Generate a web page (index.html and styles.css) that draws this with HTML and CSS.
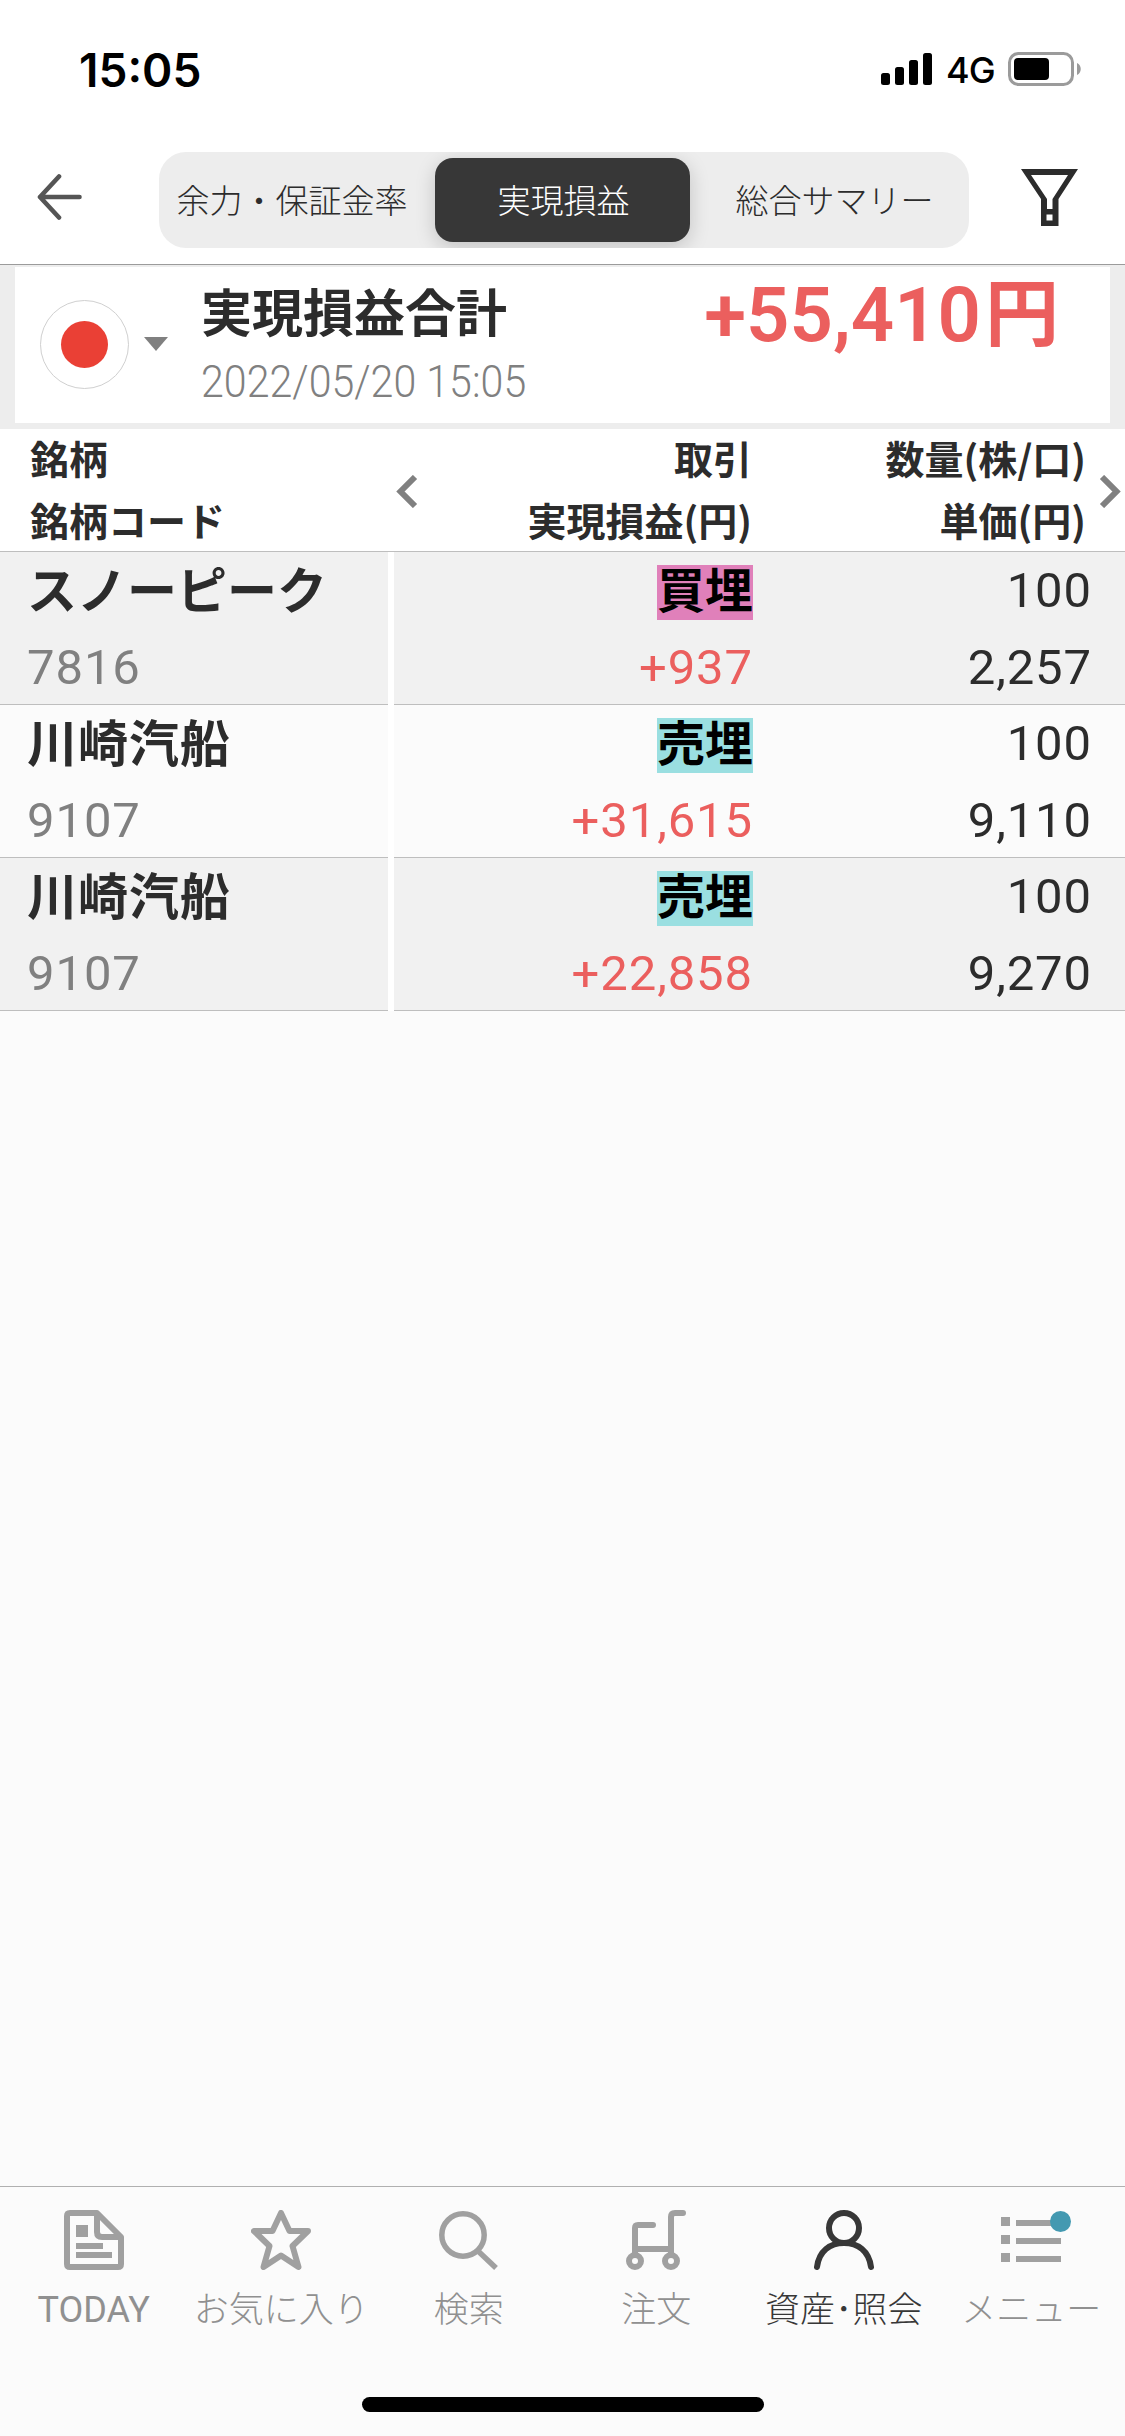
FILE: index.html
```html
<!DOCTYPE html>
<html lang="ja">
<head>
    <meta charset="UTF-8">
    <meta name="viewport" content="width=device-width, initial-scale=1.0">
    <title>実現損益</title>
    <link rel="stylesheet" href="styles.css">
</head>
<body>
    <div class="app">
        <div class="status">
            <div class="time">15:05</div>
            <div class="status-right">
                <svg class="signal" width="51" height="32" viewBox="0 0 51 32">
                    <rect x="0" y="20" width="9" height="12" rx="2.5"/>
                    <rect x="14" y="14" width="9" height="18" rx="2.5"/>
                    <rect x="28" y="7" width="9" height="25" rx="2.5"/>
                    <rect x="42" y="0" width="9" height="32" rx="2.5"/>
                </svg>
                <span class="network">4G</span>
                <svg class="battery" width="74" height="34" viewBox="0 0 74 34">
                    <rect x="1.5" y="1.5" width="63" height="31" rx="9" fill="none" stroke="#9b9b9b" stroke-width="3"/>
                    <rect x="6" y="6" width="35" height="22" rx="4"/>
                    <path d="M69 11c5 2 5 10 0 12z" fill="#9b9b9b"/>
                </svg>
            </div>
        </div>

        <header class="nav">
            <svg class="back" width="45" height="46" viewBox="0 0 45 46" fill="none" stroke="#555" stroke-width="4.6" stroke-linecap="round" stroke-linejoin="round">
                <path d="M42.5 23H3M22 2.5L3 23l19 20.5"/>
            </svg>
            <div class="segments">
                <div class="segment">余力・保証金率</div>
                <div class="segment active">実現損益</div>
                <div class="segment">総合サマリー</div>
            </div>
            <svg class="filter" width="57" height="57" viewBox="0 0 57 57">
                <path fill="#2c2c2c" fill-rule="evenodd" d="M0 0h57L37.500 30v27H20V30zM10 6l16 24v10h5.500V30L47 6zM25.500 45.500h6v6h-6z"/>
            </svg>
        </header>

        <section class="summary">
            <div class="card">
                <div class="flag"><div class="sun"></div></div>
                <div class="caret"></div>
                <div class="summary-text">
                    <div class="summary-title">実現損益合計</div>
                    <div class="summary-date">2022/05/20 15:05</div>
                </div>
                <div class="total"><span class="total-number">+55,410</span><span class="yen">円</span></div>
            </div>
        </section>

        <div class="table-head">
            <div class="head-name">
                <div>銘柄</div>
                <div>銘柄コード</div>
            </div>
            <svg class="chevron" width="22" height="33" viewBox="0 0 22 33" fill="none" stroke="#808080" stroke-width="6">
                <path d="M19 2L4.500 16.500 19 31"/>
            </svg>
            <div class="head-trade">
                <div>取引</div>
                <div>実現損益(円)</div>
            </div>
            <div class="head-qty">
                <div>数量(株/口)</div>
                <div>単価(円)</div>
            </div>
            <svg class="chevron" width="22" height="33" viewBox="0 0 22 33" fill="none" stroke="#808080" stroke-width="6">
                <path d="M3 2l14.500 14.500L3 31"/>
            </svg>
        </div>

        <div class="rows">
            <div class="row">
                <div class="cell-name">
                    <div class="name">スノーピーク</div>
                    <div class="code">7816</div>
                </div>
                <div class="cell-values">
                    <div class="trade">
                        <div class="tag buy">買埋</div>
                        <div class="profit">+937</div>
                    </div>
                    <div class="qty">
                        <div class="count">100</div>
                        <div class="price">2,257</div>
                    </div>
                </div>
            </div>
            <div class="row">
                <div class="cell-name">
                    <div class="name kanji">川崎汽船</div>
                    <div class="code">9107</div>
                </div>
                <div class="cell-values">
                    <div class="trade">
                        <div class="tag sell">売埋</div>
                        <div class="profit">+31,615</div>
                    </div>
                    <div class="qty">
                        <div class="count">100</div>
                        <div class="price">9,110</div>
                    </div>
                </div>
            </div>
            <div class="row">
                <div class="cell-name">
                    <div class="name kanji">川崎汽船</div>
                    <div class="code">9107</div>
                </div>
                <div class="cell-values">
                    <div class="trade">
                        <div class="tag sell">売埋</div>
                        <div class="profit">+22,858</div>
                    </div>
                    <div class="qty">
                        <div class="count">100</div>
                        <div class="price">9,270</div>
                    </div>
                </div>
            </div>
        </div>

        <nav class="tabs">
            <div class="tab">
                <svg width="60" height="60" viewBox="0 0 60 60" fill="none" stroke="currentColor" stroke-width="6" stroke-linejoin="round">
                    <path d="M6 3h27L57 27v27q0 3-3 3H6q-3 0-3-3V6q0-3 3-3zM33 3v19q0 5 5 5h19"/>
                    <path fill="currentColor" stroke="none" d="M12 15h12v12H12zM12 33h27v6H12zM12 42h36v6H12z"/>
                </svg>
                <div class="label latin">TODAY</div>
            </div>
            <div class="tab">
                <svg width="60" height="60" viewBox="0 0 60 60" fill="none" stroke="currentColor" stroke-width="6" stroke-linejoin="round">
                    <path d="M30 3l8.500 18H57L41.500 36l6 21L30 45.500 12.500 57l6-21L3 21h18.500z"/>
                </svg>
                <div class="label">お気に入り</div>
            </div>
            <div class="tab">
                <svg width="60" height="60" viewBox="0 0 60 60" fill="none" stroke="currentColor" stroke-width="5.500">
                    <circle cx="24" cy="25" r="21.200"/>
                    <path d="M38.500 40.500L57 58"/>
                </svg>
                <div class="label">検索</div>
            </div>
            <div class="tab">
                <svg width="60" height="60" viewBox="0 0 60 60" fill="none" stroke="currentColor" stroke-width="6" stroke-linecap="round">
                    <circle cx="9" cy="51" r="6"/>
                    <circle cx="45" cy="51" r="6"/>
                    <path d="M9 45V18q0-3 3-3h15M45 45V7q0-4 4-4h8M9 39h36"/>
                </svg>
                <div class="label">注文</div>
            </div>
            <div class="tab current">
                <svg width="60" height="60" viewBox="0 0 60 60" fill="none" stroke="currentColor" stroke-width="6" stroke-linecap="round">
                    <circle cx="30" cy="18" r="15"/>
                    <path d="M3 57C5 41 16 33 30 33s25 8 27 24"/>
                </svg>
                <div class="label">資産･照会</div>
            </div>
            <div class="tab">
                <div class="menu-icon">
                    <svg width="60" height="60" viewBox="0 0 60 60" fill="currentColor">
                        <path d="M0 7h9v9H0zM0 25h9v9H0zM0 43h9v9H0zM15 10h45v6H15zM15 28h45v6H15zM15 46h45v6H15z"/>
                    </svg>
                    <span class="badge"></span>
                </div>
                <div class="label">メニュー</div>
            </div>
        </nav>
        <div class="home-bar"></div>
    </div>
</body>
</html>
```

FILE: styles.css
```css
* {
    box-sizing: border-box;
}

body {
    margin: 0;
    background: #fbfbfb;
    color: #2c2c2c;
    font-family: "Noto Sans CJK JP", sans-serif;
}

svg {
    display: block;
    flex: none;
}

.app {
    width: 1125px;
    height: 2436px;
    display: flex;
    flex-direction: column;
    overflow: hidden;
}

.status {
    height: 138px;
    padding: 0 43px 0 79px;
    background: #fff;
    color: #000;
    font-family: Inter, sans-serif;
    display: flex;
    align-items: center;
    justify-content: space-between;
}

.time {
    padding-top: 1px;
    font-size: 46px;
    font-weight: 600;
    line-height: 54px;
}

.status-right {
    display: flex;
    align-items: center;
}

.network {
    width: 76px;
    padding-left: 14px;
    padding-top: 2px;
    font-size: 36px;
    line-height: 40px;
    font-weight: 500;
    letter-spacing: -1px;
}

.nav {
    height: 127px;
    padding: 14px 47px 0 37px;
    background: #fff;
    border-bottom: 1px solid #9b9b9b;
    display: flex;
    align-items: flex-start;
}

.back {
    margin-top: 22px;
}

.segments {
    width: 810px;
    height: 96px;
    margin: 0 52px 0 77px;
    padding: 6px 0;
    background: #ededed;
    border-radius: 27px;
    display: flex;
    overflow: hidden;
}

.segment {
    width: 276px;
    padding-right: 10px;
    font-size: 33px;
    font-weight: 300;
    line-height: 82px;
    text-align: center;
    white-space: nowrap;
}

.segment.active {
    width: 255px;
    padding: 0 0 0 2px;
    background: #373737;
    color: #fff;
    border-radius: 18px;
    box-shadow: 0 5px 20px rgba(0, 0, 0, .18);
}

.segment:last-child {
    width: 279px;
    padding-left: 10px;
    padding-right: 0;
}

.filter {
    margin-top: 17px;
}

.summary {
    height: 164px;
    padding: 2px 15px 6px;
    background: #ededed;
}

.card {
    height: 156px;
    padding: 0 51px 0 25px;
    background: #fff;
    display: flex;
    align-items: flex-start;
}

.flag {
    width: 89px;
    height: 89px;
    margin-top: 33px;
    border: 1px solid #d0d0d0;
    border-radius: 50%;
    display: flex;
    align-items: center;
    justify-content: center;
}

.sun {
    width: 47px;
    height: 47px;
    border-radius: 50%;
    background: #ea4035;
}

.caret {
    margin: 70px 0 0 15px;
    border: 12px solid transparent;
    border-top: 14px solid #808080;
    border-bottom: 0;
}

.summary-text {
    margin-left: 33px;
}

.summary-title {
    font-size: 51px;
    font-weight: 700;
    line-height: 60px;
    margin-top: 13px;
    white-space: nowrap;
}

.summary-date {
    width: 340px;
    margin-top: 16px;
    color: #808080;
    font-family: Roboto, sans-serif;
    font-size: 44px;
    font-weight: 300;
    line-height: 52px;
    white-space: nowrap;
    transform: scaleX(.935);
    transform-origin: left;
}

.total {
    margin-left: auto;
    color: #eb5f5e;
    display: flex;
    align-items: flex-start;
}

.total-number {
    padding-top: 3px;
    font-family: Roboto, sans-serif;
    font-size: 76px;
    font-weight: 600;
    line-height: 90px;
}

.yen {
    margin-left: 4px;
    font-size: 74px;
    font-weight: 700;
    line-height: 82px;
}

.table-head {
    height: 123px;
    padding-left: 30px;
    background: #fff;
    border-bottom: 1px solid #bebebe;
    font-size: 39px;
    font-weight: 700;
    line-height: 62px;
    display: flex;
    align-items: flex-start;
}

.head-name,
.head-trade,
.head-qty {
    margin-top: -3px;
}

.head-name {
    width: 366px;
}

.head-trade,
.head-qty {
    width: 334px;
    text-align: right;
    white-space: nowrap;
}

.head-qty {
    margin-right: 13px;
}

.chevron {
    margin-top: 46px;
}

.rows {
    flex: 1;
}

.row {
    height: 153px;
    background: #fff;
    display: flex;
    gap: 6px;
}

.cell-name,
.cell-values {
    background: #fbfbfb;
    border-bottom: 1px solid #bebebe;
}

.row:nth-child(odd) .cell-name,
.row:nth-child(odd) .cell-values {
    background: #f1f1f1;
}

.cell-name {
    width: 388px;
    padding-left: 27px;
}

.name {
    font-size: 50px;
    font-weight: 700;
    line-height: 70px;
    white-space: nowrap;
}

.kanji {
    letter-spacing: 1px;
}

.code,
.profit,
.count,
.price {
    font-family: Roboto, sans-serif;
    font-size: 49px;
    letter-spacing: .9px;
    line-height: 78px;
}

.code {
    padding-top: 7px;
    color: #808080;
}

.cell-values {
    flex: 1;
    display: flex;
}

.trade {
    width: 359px;
    display: flex;
    flex-direction: column;
    align-items: flex-end;
}

.tag {
    flex: none;
    height: 55px;
    margin: 13px 0 9px;
    color: #000;
    font-size: 48px;
    font-weight: 700;
    line-height: 44px;
}

.buy {
    background: #e080ba;
}

.sell {
    background: #9adfe1;
}

.profit {
    color: #eb5f5e;
}

.qty {
    width: 339px;
    text-align: right;
}

.price {
    margin-top: -1px;
}

.tabs {
    height: 211px;
    border-top: 1px solid #b0b0b0;
    padding-top: 23px;
    display: grid;
    grid-template-columns: repeat(6, 1fr);
}

.tab {
    color: #a0a0a0;
    display: flex;
    flex-direction: column;
    align-items: center;
}

.current {
    color: #373737;
}

.label {
    margin-top: 14px;
    color: #909090;
    font-size: 35px;
    font-weight: 300;
    line-height: 46px;
    white-space: nowrap;
}

.current .label {
    color: #373737;
}

.latin {
    padding-top: 3px;
    font-family: Roboto, sans-serif;
    font-size: 36px;
    font-weight: 400;
}

.menu-icon {
    position: relative;
}

.badge {
    position: absolute;
    top: 1px;
    right: -10px;
    width: 21px;
    height: 21px;
    border-radius: 50%;
    background: #4399b1;
}

.home-bar {
    width: 402px;
    height: 15px;
    margin: 0 auto 24px;
    background: #000;
    border-radius: 8px;
}
```
